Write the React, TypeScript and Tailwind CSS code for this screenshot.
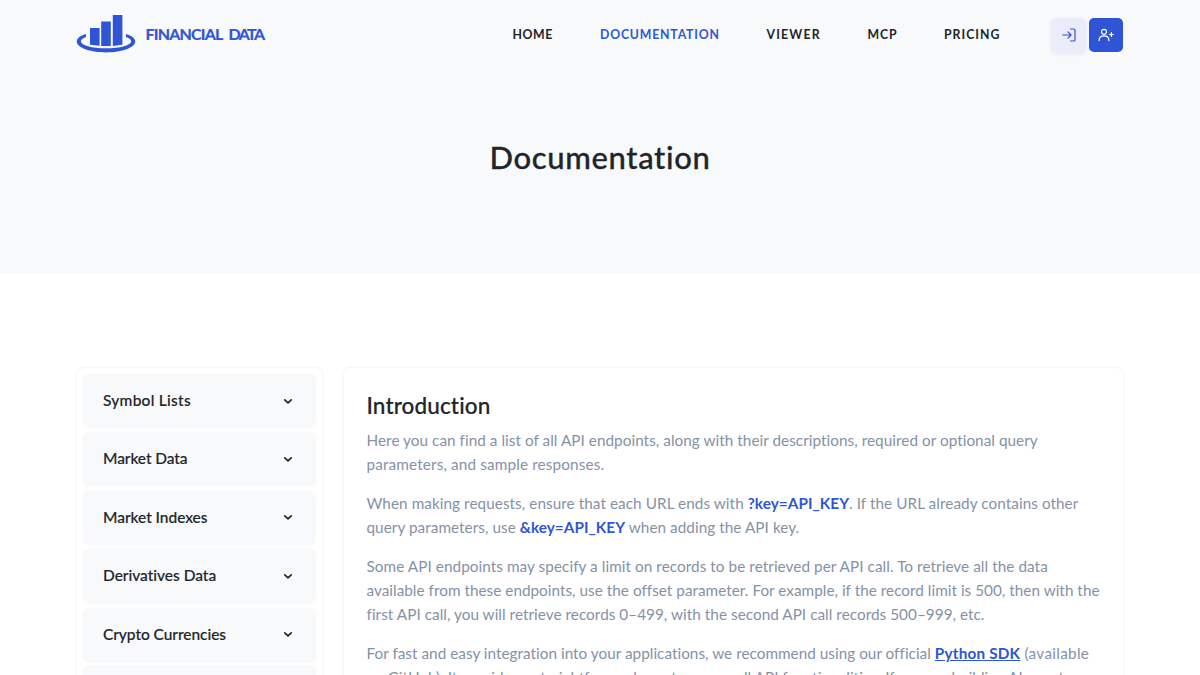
import type { ReactNode } from "react";

const navItems = [
  { label: "HOME", className: "w-[87.5px] tracking-[0.6px]" },
  { label: "DOCUMENTATION", className: "w-[166.5px] tracking-[0.8px] text-[#2f55d4]" },
  { label: "VIEWER", className: "w-[101px] tracking-[1.2px]" },
  { label: "MCP", className: "w-[76.5px] tracking-[0.9px]" },
  { label: "PRICING", className: "w-[107px] tracking-[1px]" },
];

const sections = [
  { label: "Symbol Lists", className: "tracking-[0.25px]" },
  { label: "Market Data", className: "tracking-[-0.09px]" },
  { label: "Market Indexes", className: "tracking-[-0.04px]" },
  { label: "Derivatives Data", className: "tracking-[-0.02px]" },
  { label: "Crypto Currencies", className: "tracking-[-0.05px]" },
  { label: "International Securities", className: "tracking-normal" },
];

function Logo() {
  return (
    <a href="#" className="flex h-[40px] items-center text-[#2f55d4]">
      <svg width="60" height="40" viewBox="0 0 60 40" fill="currentColor">
        <path d="M14 15h9.6v17.8L14 31.8z" />
        <path d="M25.2 8.6h9.6V33h-9.6z" />
        <path d="M36.8 2h9.6v29.8l-9.6 1.1z" />
        <path d="M10 20.9C4 22.6.8 25.2.8 28.6c0 6 13 10.9 29.2 10.9s29.2-4.9 29.2-10.9c0-3.5-3.3-6-9.2-7.7v3.2c3.5 1.1 5.2 2.6 5.2 4.1 0 3.9-10.8 7.1-25.2 7.1S4.9 32.1 4.9 28.2c0-1.5 1.7-3 5.1-4.1z" />
      </svg>
      <span className="ml-[9.5px] mt-px flex gap-[6px] text-[16px] font-bold leading-5 [-webkit-text-stroke:0.2px]">
        <span className="tracking-[-0.82px]">FINANCIAL</span>
        <span className="tracking-[-1.6px]">DATA</span>
      </span>
    </a>
  );
}

function LoginIcon() {
  return (
    <svg width="16" height="16" viewBox="0 0 16 16" fill="none" stroke="currentColor" strokeWidth="1.2" strokeLinecap="round" strokeLinejoin="round">
      <path d="M1.7 8h8.4M7 4.9 10.1 8 7 11.1" />
      <path d="M9.5 2h3.2c.8 0 1.3.5 1.3 1.3v9.4c0 .8-.5 1.3-1.3 1.3H9.5" />
    </svg>
  );
}

function SignupIcon() {
  return (
    <svg width="16" height="16" viewBox="0 0 16 16" fill="none" stroke="currentColor" strokeWidth="1.2" strokeLinecap="round">
      <circle cx="6" cy="4.8" r="2.5" />
      <path d="M1.1 13.6c0-3.2 2-4.8 4.9-4.8s4.9 1.6 4.9 4.8M11.5 7.5h3.8M13.4 5.6v3.8" />
    </svg>
  );
}

function Line({ className, children }: { className?: string; children: ReactNode }) {
  return <span className={`block whitespace-pre ${className ?? ""}`}>{children}</span>;
}

function Key({ children }: { children: ReactNode }) {
  return <span className="font-bold text-[#2f55d4]">{children}</span>;
}

export default function App() {
  return (
    <div className="h-[675px] overflow-hidden bg-white font-['Lato',sans-serif] text-[#212529]">
      <div className="h-[274px] bg-[#f8f9fb]">
        <header className="mx-auto flex w-[1048px] items-start">
          <div className="pt-[13px]">
            <Logo />
          </div>
          <nav className="ml-auto flex pt-[25px] text-[12.3px] font-bold leading-5">
            {navItems.map((item) => (
              <a key={item.label} href="#" className={item.className}>
                {item.label}
              </a>
            ))}
          </nav>
          <div className="mr-px flex gap-[3px] pt-[18.4px]">
            <a href="#" className="flex h-[34px] w-[35px] items-center justify-center rounded-[5px] bg-[#eaedf9] text-[#2f55d4] shadow-[0_2px_4px_rgba(47,85,212,0.1)]">
              <LoginIcon />
            </a>
            <a href="#" className="flex h-[34px] w-[34px] items-center justify-center rounded-[5px] bg-[#2f55d4] text-white">
              <SignupIcon />
            </a>
          </div>
        </header>
        <h1 className="mt-[81px] text-center text-[31px] font-medium leading-[46px] tracking-[0.63px] [-webkit-text-stroke:0.3px]">Documentation</h1>
      </div>

      <main className="mx-auto mt-[94px] flex w-[1048px] items-start gap-[22px]">
        <aside className="ml-px flex h-[420px] w-[245px] shrink-0 flex-col gap-1 rounded-md p-[6px] shadow-[0_0_3px_rgba(60,72,88,0.13)]">
          {sections.map((section) => (
            <button
              key={section.label}
              className="flex h-[54.4px] shrink-0 items-center justify-between rounded-md bg-[#f8f9fb] pl-5 pr-[22px] pb-px text-left shadow-[0_0_2px_rgba(60,72,88,0.06)]"
            >
              <span className={`text-[15.5px] font-medium [-webkit-text-stroke:0.15px] ${section.className}`}>{section.label}</span>
              <svg width="12" height="12" viewBox="0 0 12 12" fill="none" stroke="currentColor" strokeWidth="1.7" strokeLinecap="round" strokeLinejoin="round">
                <path d="M2.8 4.9 6 7.9l3.2-3" />
              </svg>
            </button>
          ))}
        </aside>

        <article className="h-[420px] w-[779px] shrink-0 rounded-md pl-[22.5px] pt-[21px] shadow-[0_0_3px_rgba(60,72,88,0.13)]">
          <h2 className="text-[22.5px] font-medium leading-[34px] tracking-[0.12px] [-webkit-text-stroke:0.2px]">Introduction</h2>
          <div className="mt-[5.8px] flex flex-col gap-[15.8px] text-[15.3px] leading-[23.75px] text-[#8492a6]">
            <p>
              <Line className="tracking-[0.04px]">Here you can find a list of all API endpoints, along with their descriptions, required or optional query</Line>
              <Line className="tracking-[0.14px]">parameters, and sample responses.</Line>
            </p>
            <p>
              <Line className="tracking-[0.06px]">
                When making requests, ensure that each URL ends with <Key>?key=API_KEY</Key>. If the URL already contains other
              </Line>
              <Line className="tracking-[0.05px]">
                query parameters, use <Key>&amp;key=API_KEY</Key> when adding the API key.
              </Line>
            </p>
            <p>
              <Line className="tracking-[0.06px]">Some API endpoints may specify a limit on records to be retrieved per API call. To retrieve all the data</Line>
              <Line className="tracking-[0.022px]">available from these endpoints, use the offset parameter. For example, if the record limit is 500, then with the</Line>
              <Line className="tracking-[0.035px]">first API call, you will retrieve records 0–499, with the second API call records 500–999, etc.</Line>
            </p>
            <p>
              <Line className="tracking-[0.022px]">
                For fast and easy integration into your applications, we recommend using our official{" "}
                <a href="#" className="font-bold tracking-[0.2px] text-[#2f55d4] underline">Python SDK</a>
                <span className="tracking-[0.3px]"> (available</span>
              </Line>
              <Line>on GitHub). It provides a straightforward way to access all API functionalities. If you are building AI agents</Line>
            </p>
          </div>
        </article>
      </main>
    </div>
  );
}
